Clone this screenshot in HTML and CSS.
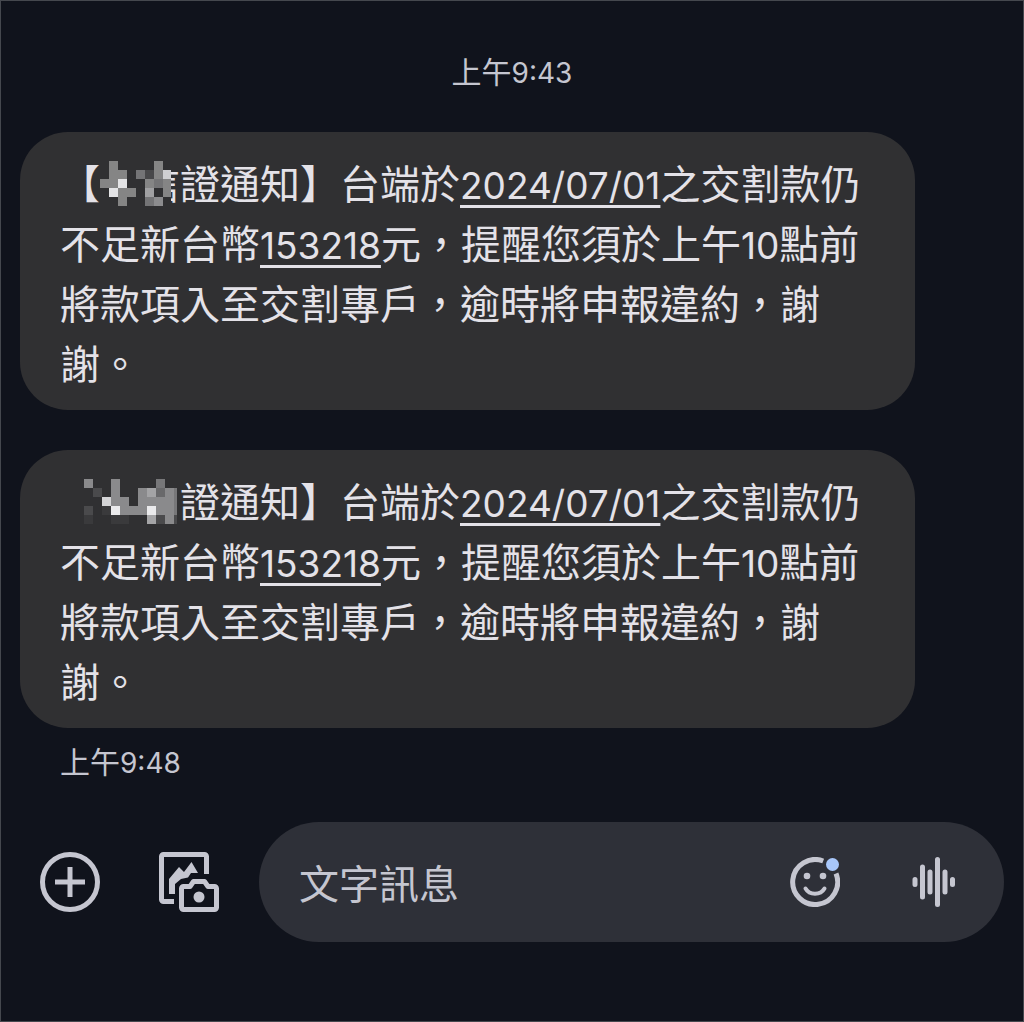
FILE: index.html
```html
<!DOCTYPE html>
<html lang="zh-Hant">
<head>
<meta charset="utf-8">
<meta name="viewport" content="width=device-width, initial-scale=1">
<title>訊息</title>
<link rel="stylesheet" href="styles.css">
</head>
<body>
<main class="chat">
  <time class="stamp stamp-day">上午<span class="latin">9:43</span></time>

  <section class="thread">
    <p class="bubble">【<span class="redacted">信<svg class="mosaic" width="71" height="45" viewBox="0 0 71 45" shape-rendering="crispEdges" aria-hidden="true">
      <rect width="71" height="45" fill="#303032"/>
      <path fill="#858585" d="M9 0h9v9h9v9h-9v9H0v-9h9zM54 0h9v18h8v18h-8v-9h-9v-9zM18 27h18v9h-9v9h-9zM45 18h9v9h-9z"/>
      <path fill="#747476" d="M36 9h9v9h-9zM45 36h9v9h-9zM54 18h9v9h-9z"/>
      <path fill="#48484a" d="M45 9h9v9h-9z"/>
      <path fill="#a0a0a2" d="M45 27h9v9h-9z"/>
      <path fill="#8c8c8e" d="M54 36h9v9h-9z"/>
      <path fill="#e4e4e6" d="M18 18h9v9h-9zM9 27h9v9H9z"/>
      <path fill="#d0d0d2" d="M63 9h8v9h-8z"/>
    </svg></span>證通知】台端於<a class="latin" href="#date">2024/07/01</a>之交割款仍不足新台幣<a class="latin" href="#amount">153218</a>元，提醒您須於上午<span class="latin">10</span>點前將款項入至交割專戶，逾時將申報違約，謝謝。</p>

    <p class="bubble"><span class="redacted redacted-wide"><svg class="mosaic" width="93" height="45" viewBox="0 0 93 45" shape-rendering="crispEdges" aria-hidden="true">
      <rect width="93" height="45" fill="#303032"/>
      <path fill="#8a8a8c" d="M0 0h9v9H0zM27 0h9v18h9v9h9V9h36v27H36v-9h-9zM81 36h9v9h-9z"/>
      <path fill="#777779" d="M72 0h9v9h-9zM90 9h3v27h-3z"/>
      <path fill="#a4a4a6" d="M63 9h9v9h-9zM63 36h9v9h-9z"/>
      <path fill="#69696b" d="M72 9h9v9h-9z"/>
      <path fill="#4a4a4c" d="M9 9h9v9H9zM0 27h9v9H0zM72 36h9v9h-9zM90 36h3v9h-3z"/>
      <path fill="#3a3a3c" d="M0 36h9v9H0zM18 27h9v9h-9zM27 36h18v9H27z"/>
      <path fill="#d4d4d6" d="M18 18h9v9h-9z"/>
      <path fill="#eaeaec" d="M27 27h9v9h-9zM63 27h9v9h-9z"/>
    </svg></span>證通知】台端於<a class="latin" href="#date">2024/07/01</a>之交割款仍不足新台幣<a class="latin" href="#amount">153218</a>元，提醒您須於上午<span class="latin">10</span>點前將款項入至交割專戶，逾時將申報違約，謝謝。</p>
  </section>

  <time class="stamp stamp-sent">上午<span class="latin">9:48</span></time>

  <form class="composer">
    <button class="icon-button" type="button" aria-label="新增">
      <svg width="60" height="60" viewBox="0 0 60 60" fill="none" stroke="currentColor" stroke-width="5">
        <circle cx="30" cy="30" r="27.5"/>
        <path d="M30 15v30M15 30h30"/>
      </svg>
    </button>
    <button class="icon-button" type="button" aria-label="相片與相機">
      <svg width="60" height="60" viewBox="0 0 60 60" fill="none" stroke="currentColor" stroke-width="5">
        <path d="M47.500 22V4.500a2 2 0 0 0-2-2h-41a2 2 0 0 0-2 2v43a2 2 0 0 0 2 2H15"/>
        <path fill="currentColor" stroke="none" d="M10 27l10-12 5 5 7.500-10L39 21h-7l-3 4.500-7 1.500-6 5v10h-6z"/>
        <path stroke-linejoin="round" d="M24.500 34.500h6.500l3.500-5h11l3.500 5h6.500a2 2 0 0 1 2 2v19a2 2 0 0 1-2 2h-31a2 2 0 0 1-2-2v-19a2 2 0 0 1 2-2z"/>
        <circle cx="40" cy="45" r="5.500" fill="currentColor" stroke="none"/>
      </svg>
    </button>
    <div class="field">
      <input class="field-input" type="text" placeholder="文字訊息" aria-label="文字訊息">
      <button class="icon-button" type="button" aria-label="表情符號">
        <svg width="50" height="50" viewBox="0 0 50 50" fill="none" stroke="currentColor" stroke-width="5">
          <path d="M33.200 4A22.500 22.500 0 1 0 46 16.500"/>
          <path stroke-width="4" stroke-linecap="round" d="M15.500 31.500c4 7 15 7 19 0"/>
          <g stroke="none">
            <circle cx="17" cy="19" r="3.300" fill="currentColor"/>
            <circle cx="33" cy="19" r="3.300" fill="currentColor"/>
            <circle cx="42.500" cy="7.500" r="6.500" fill="#a8c7fa"/>
          </g>
        </svg>
      </button>
      <button class="icon-button" type="button" aria-label="錄製語音">
        <svg width="44" height="50" viewBox="0 0 44 50" fill="none" stroke="currentColor" stroke-width="5" stroke-linecap="round">
          <path d="M3 22.500v5M10.500 10v30M18 15v20M25.500 2.500v45M33 15v20M40.500 22.500v5"/>
        </svg>
      </button>
    </div>
  </form>
</main>
</body>
</html>
```
FILE: styles.css
```css
* {
  box-sizing: border-box;
}

body {
  margin: 0;
  background: #10131c;
  color: #e4e2e8;
  font-family: "Noto Sans CJK TC", sans-serif;
}

.chat {
  display: flex;
  flex-direction: column;
  min-height: 100vh;
  border: 1px solid #45484e;
  padding: 49px 19px 0;
}

.latin {
  font-family: Inter, "Noto Sans CJK TC", sans-serif;
  font-size: 37px;
  line-height: 1;
  white-space: nowrap;
}

.stamp {
  color: #c5c6d0;
  font-size: 30px;
  line-height: 40px;
}

.stamp .latin {
  font-size: 28px;
}

.stamp-day {
  align-self: center;
}

.stamp-sent {
  margin: 12px 40px 0;
}

.thread {
  display: flex;
  flex-direction: column;
  align-items: flex-start;
  gap: 40px;
  margin-top: 42px;
}

.bubble {
  max-width: 91%;
  margin: 0;
  padding: 20px 40px 18px;
  border-radius: 48px;
  background: #303032;
  font-size: 40px;
  line-height: 60px;
}

.bubble a {
  color: inherit;
  text-decoration: underline 3px;
  text-decoration-skip-ink: none;
  text-underline-offset: 6px;
}

.redacted {
  display: inline-block;
  position: relative;
  width: 80px;
  height: 60px;
  text-align: right;
  vertical-align: top;
}

.redacted-wide {
  width: 120px;
}

.mosaic {
  position: absolute;
  top: 9px;
  left: 0;
}

.redacted-wide .mosaic {
  left: 24px;
}

.composer {
  display: flex;
  align-items: center;
  margin-top: 40px;
  padding: 2px 0 0 20px;
}

.icon-button {
  display: flex;
  flex: none;
  border: 0;
  padding: 0;
  background: none;
  color: #c5c6d0;
  cursor: pointer;
}

.composer > .icon-button {
  margin-right: 59px;
}

.composer > .icon-button + .icon-button {
  margin-right: 40px;
}

.field {
  display: flex;
  flex: 1;
  align-items: center;
  gap: 72px;
  min-width: 0;
  height: 120px;
  padding: 0 48px 0 40px;
  border-radius: 60px;
  background: #2e3038;
}

.field-input {
  flex: 1;
  min-width: 0;
  border: 0;
  outline: 0;
  padding: 0;
  background: none;
  color: #e4e2e8;
  font: 40px/60px "Noto Sans CJK TC", sans-serif;
}

.field-input::placeholder {
  color: #c5c6d0;
  opacity: 1;
}
```
